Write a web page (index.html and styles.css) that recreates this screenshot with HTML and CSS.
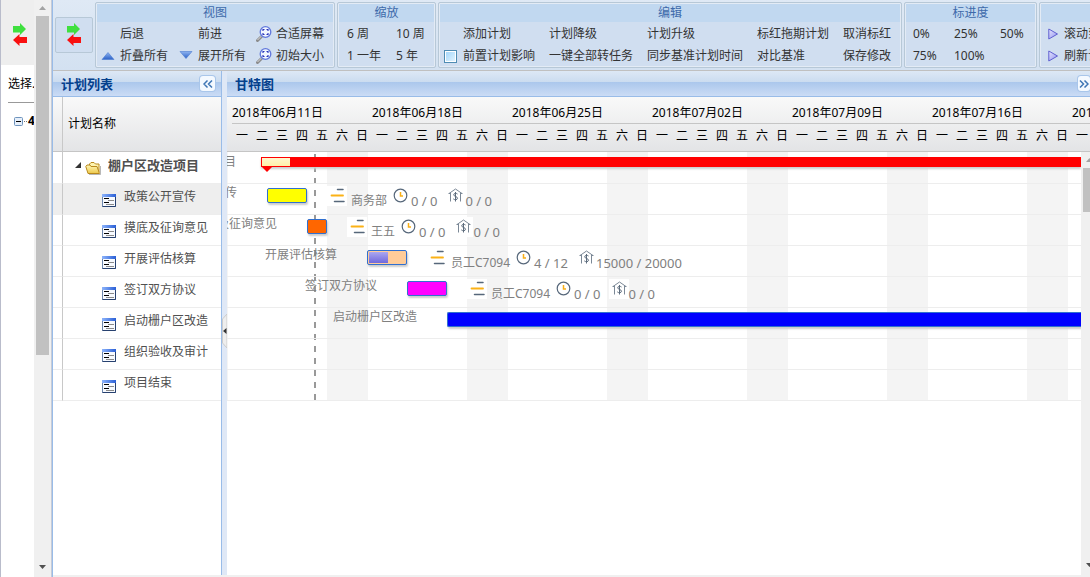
FILE: index.html
```html
<!DOCTYPE html>
<html lang="zh-CN">
<head>
<meta charset="utf-8">
<title>甘特图</title>
<link rel="stylesheet" href="styles.css">
</head>
<body>
<svg class="defs" aria-hidden="true">
  <defs>
    <linearGradient id="g-blue" x1="0" y1="0" x2="0" y2="1"><stop offset="0" stop-color="#8fb4f0"/><stop offset="1" stop-color="#2c62c8"/></linearGradient>
    <linearGradient id="g-violet" x1="0" y1="0" x2="1" y2="1"><stop offset="0" stop-color="#e8e8ff"/><stop offset="1" stop-color="#8f8fee"/></linearGradient>
    <linearGradient id="g-folder" x1="0" y1="0" x2="0" y2="1"><stop offset="0" stop-color="#fff7b8"/><stop offset="1" stop-color="#edc84a"/></linearGradient>
    <linearGradient id="g-title" x1="0" y1="0" x2="1" y2="0"><stop offset="0" stop-color="#8db4fb"/><stop offset="1" stop-color="#2a5fd6"/></linearGradient>
  </defs>
  <symbol id="swap" viewBox="0 0 16 24">
    <path d="M1 3h7V0l6 6-6 6V9.500H1z" fill="#3fe03f"/>
    <path d="M15 14H7.500v-3L1 17l6.500 6v-3H15z" fill="#f91010"/>
  </symbol>
  <symbol id="fit" viewBox="0 0 16 16">
    <path d="M1.500 14.500l4-4" stroke="#8c8c8c" stroke-width="3" stroke-linecap="round"/>
    <path d="M1.500 14l4-4" stroke="#dcdcdc"/>
    <circle cx="9.500" cy="6" r="5.300" fill="#f2f6ff" stroke="#6278dc" stroke-width="1.300"/>
    <path d="M7 5V3.500h1.500M10.500 3.500H12V5M12 7v1.500h-1.500M8.500 8.500H7V7" fill="none" stroke="#2430b8" stroke-width="1.100"/>
  </symbol>
  <symbol id="up" viewBox="0 0 16 16"><path d="M2 11.500L8 4.500l6 7z" fill="url(#g-blue)" stroke="#4a7bd0" stroke-width=".6"/></symbol>
  <symbol id="down" viewBox="0 0 16 16"><path d="M2 3.500h12l-6 7z" fill="url(#g-blue)" stroke="#4a7bd0" stroke-width=".6"/></symbol>
  <symbol id="play" viewBox="0 0 10 12"><path d="M.8 1v10L9.500 6z" fill="url(#g-violet)" stroke="#5f5fd0"/></symbol>
  <symbol id="folder" viewBox="0 0 16 14">
    <path d="M4.500 5V3L6 1.500h3L10.500 3h3.500v8" fill="#fdf3b0" stroke="#b9891c"/>
    <path d="M3 12.500L.8 5.500 2 4h3l1 1.500h6l2.500 7z" fill="url(#g-folder)" stroke="#b9891c" stroke-linejoin="round"/>
    <path d="M4 13.500h11.500V5" fill="none" stroke="#999" stroke-width=".7"/>
  </symbol>
  <symbol id="task" viewBox="0 0 14 13">
    <path d="M.5.500h13v12H.5z" fill="#f7faff" stroke="#6d87ad"/>
    <path d="M0 0h14v3H0z" fill="url(#g-title)"/>
    <path d="M13.500 3v9.500H.5" fill="none" stroke="#27416f"/>
    <path d="M2 4.500h5M2 8.500h5" stroke="#000"/>
    <path d="M6 6.500h6M4 10.500h8" stroke="#8a8a8a"/>
  </symbol>
  <symbol id="member" viewBox="0 0 20 20">
    <path d="M10.500 3.500H16M7.500 15.500H17" stroke="#56677a" stroke-width="1.500" stroke-linecap="round"/>
    <path d="M4.500 9.500H16" stroke="#fbb216" stroke-width="1.800" stroke-linecap="round"/>
  </symbol>
  <symbol id="clock" viewBox="0 0 20 20">
    <circle cx="9.500" cy="9.500" r="6.300" fill="#fff" stroke="#56677a" stroke-width="1.200"/>
    <path d="M9.500 6v4H12" fill="none" stroke="#f8ae16" stroke-width="1.500"/>
  </symbol>
  <symbol id="cost" viewBox="0 0 20 20">
    <path d="M4 7.500L10.500 3 17 7.500M5.500 7v8.500M15.500 7v8.500M3.500 7.500h2M15.500 7.500h2" fill="none" stroke="#7b8896"/>
    <path d="M12.500 8c-1-1-3.800-.9-3.800.8s3.800 1.600 3.800 3.400-3 1.900-4.200.7M10.500 6v9.500" fill="none" stroke="#5c6b7c"/>
  </symbol>
</svg>

<div class="app">
  <aside class="side">
    <div class="side-content">
      <div class="side-top"><svg class="swap"><use href="#swap"/></svg></div>
      <div class="side-label">选择...</div>
      <div class="side-tree">
        <svg class="toggle" viewBox="0 0 14 9"><rect x=".5" y=".5" width="8" height="8" rx="1" fill="#e6effa" stroke="#6f94bd"/><path d="M2 4.500h5" stroke="#000"/><path d="M10 4.500h1M12 4.500h1" stroke="#777"/></svg><b>4</b>
      </div>
    </div>
    <div class="scroll side-scroll">
      <svg class="arrow" viewBox="0 0 7 4"><path d="M0 4l3.500-4L7 4z" fill="#a3a3a3"/></svg>
      <span class="thumb"></span>
      <svg class="arrow last" viewBox="0 0 7 4"><path d="M0 0l3.500 4L7 0z" fill="#505050"/></svg>
    </div>
  </aside>

  <main class="main">
    <div class="toolbar">
      <button class="swap-btn" aria-label="切换"><svg class="swap"><use href="#swap"/></svg></button>
      <section class="group view">
        <h2>视图</h2>
        <div class="cmds">
          <button><i class="ic"></i>后退</button><button><i class="ic"></i>前进</button><button><svg class="ic"><use href="#fit"/></svg>合适屏幕</button>
          <button><svg class="ic"><use href="#up"/></svg>折叠所有</button><button><svg class="ic"><use href="#down"/></svg>展开所有</button><button><svg class="ic"><use href="#fit"/></svg>初始大小</button>
        </div>
      </section>
      <section class="group zoom">
        <h2>缩放</h2>
        <div class="cmds"><button>6 周</button><button>10 周</button><button>1 一年</button><button>5 年</button></div>
      </section>
      <section class="group edit">
        <h2>编辑</h2>
        <div class="cmds">
          <button class="indent">添加计划</button><button>计划降级</button><button>计划升级</button><button>标红拖期计划</button><button>取消标红</button>
          <label><input type="checkbox">前置计划影响</label><button>一键全部转任务</button><button>同步基准计划时间</button><button>对比基准</button><button>保存修改</button>
        </div>
      </section>
      <section class="group progress">
        <h2>标进度</h2>
        <div class="cmds"><button>0%</button><button>25%</button><button>50%</button><button>75%</button><button>100%</button></div>
      </section>
      <section class="group more">
        <h2></h2>
        <div class="cmds"><button><svg class="play"><use href="#play"/></svg>滚动到今天</button><button><svg class="play"><use href="#play"/></svg>刷新计划</button></div>
      </section>
    </div>

    <div class="panels">
      <section class="plans">
        <header class="title"><h1>计划列表</h1><button class="fold" aria-label="收起"><svg viewBox="0 0 10 8"><path d="M4.500.500L1 4l3.500 3.500M9 .500L5.500 4 9 7.500" fill="none" stroke="#3f76b5" stroke-width="1.500"/></svg></button></header>
        <table class="tree">
          <thead><tr><td class="gut"></td><th>计划名称</th></tr></thead>
          <tbody>
            <tr class="root"><td class="gut"></td><td><div class="node"><svg class="caret" viewBox="0 0 6 6"><path d="M6 0v6H0z" fill="#333"/></svg><svg class="folder"><use href="#folder"/></svg><b>棚户区改造项目</b></div></td></tr>
            <tr class="hot"><td class="gut"></td><td><div class="node"><svg class="leaf"><use href="#task"/></svg>政策公开宣传</div></td></tr>
            <tr><td class="gut"></td><td><div class="node"><svg class="leaf"><use href="#task"/></svg>摸底及征询意见</div></td></tr>
            <tr><td class="gut"></td><td><div class="node"><svg class="leaf"><use href="#task"/></svg>开展评估核算</div></td></tr>
            <tr><td class="gut"></td><td><div class="node"><svg class="leaf"><use href="#task"/></svg>签订双方协议</div></td></tr>
            <tr><td class="gut"></td><td><div class="node"><svg class="leaf"><use href="#task"/></svg>启动栅户区改造</div></td></tr>
            <tr><td class="gut"></td><td><div class="node"><svg class="leaf"><use href="#task"/></svg>组织验收及审计</div></td></tr>
            <tr><td class="gut"></td><td><div class="node"><svg class="leaf"><use href="#task"/></svg>项目结束</div></td></tr>
          </tbody>
        </table>
      </section>

      <div class="splitter"><button aria-label="折叠"><svg viewBox="0 0 5 34"><path d="M5 0L.5 5v24L5 34z" fill="#eee" stroke="#ccc"/><path d="M4.500 14v6L1 17z" fill="#333"/></svg></button></div>

      <section class="gantt">
        <header class="title"><h1>甘特图</h1><button class="fold" aria-label="展开"><svg viewBox="0 0 10 8"><path d="M1 .500L4.500 4 1 7.500M5.500.500L9 4 5.500 7.500" fill="none" stroke="#3f76b5" stroke-width="1.500"/></svg></button></header>
        <div class="weeks">
          <div class="week"><p>2018年06月11日</p><div class="days"><span>一</span><span>二</span><span>三</span><span>四</span><span>五</span><span>六</span><span>日</span></div></div>
          <div class="week"><p>2018年06月18日</p><div class="days"><span>一</span><span>二</span><span>三</span><span>四</span><span>五</span><span>六</span><span>日</span></div></div>
          <div class="week"><p>2018年06月25日</p><div class="days"><span>一</span><span>二</span><span>三</span><span>四</span><span>五</span><span>六</span><span>日</span></div></div>
          <div class="week"><p>2018年07月02日</p><div class="days"><span>一</span><span>二</span><span>三</span><span>四</span><span>五</span><span>六</span><span>日</span></div></div>
          <div class="week"><p>2018年07月09日</p><div class="days"><span>一</span><span>二</span><span>三</span><span>四</span><span>五</span><span>六</span><span>日</span></div></div>
          <div class="week"><p>2018年07月16日</p><div class="days"><span>一</span><span>二</span><span>三</span><span>四</span><span>五</span><span>六</span><span>日</span></div></div>
          <div class="week"><p>2018年07月23日</p><div class="days"><span>一</span><span>二</span><span>三</span><span>四</span><span>五</span><span>六</span><span>日</span></div></div>
        </div>
        <div class="chart">
          <div class="rows">
            <div class="row"><span class="name summary-name" style="width:34px">棚户区改造项目</span><span class="summary"><i></i></span></div>
            <div class="row"><span class="name" style="width:40px">政策公开宣传</span><span class="bar yellow" style="width:40px"></span><div class="info"><svg><use href="#member"/></svg><span>商务部</span><svg><use href="#clock"/></svg><em>0 / 0</em><svg><use href="#cost"/></svg><em>0 / 0</em></div></div>
            <div class="row"><span class="name" style="width:80px">摸底及征询意见</span><span class="bar orange" style="width:20px"></span><div class="info"><svg><use href="#member"/></svg><span>王五</span><svg><use href="#clock"/></svg><em>0 / 0</em><svg><use href="#cost"/></svg><em>0 / 0</em></div></div>
            <div class="row"><span class="name" style="width:140px">开展评估核算</span><span class="bar peach" style="width:40px"><i></i></span><div class="info"><svg><use href="#member"/></svg><span>员工C7094</span><svg><use href="#clock"/></svg><em>4 / 12</em><svg><use href="#cost"/></svg><em>15000 / 20000</em></div></div>
            <div class="row"><span class="name" style="width:180px">签订双方协议</span><span class="bar pink" style="width:40px"></span><div class="info"><svg><use href="#member"/></svg><span>员工C7094</span><svg><use href="#clock"/></svg><em>0 / 0</em><svg><use href="#cost"/></svg><em>0 / 0</em></div></div>
            <div class="row"><span class="name" style="width:220px">启动栅户区改造</span><span class="bar blue"></span></div>
            <div class="row"></div>
            <div class="row"></div>
          </div>
          <div class="scroll chart-scroll">
            <svg class="arrow" viewBox="0 0 7 4"><path d="M0 4l3.500-4L7 4z" fill="#a3a3a3"/></svg>
            <span class="thumb"></span>
            <svg class="arrow last" viewBox="0 0 7 4"><path d="M0 0l3.500 4L7 0z" fill="#505050"/></svg>
          </div>
        </div>
      </section>
    </div>
  </main>
</div>
</body>
</html>
```
FILE: styles.css
```css
* { box-sizing: border-box; }
body {
  margin: 0;
  background: #fff;
  color: #000;
  font: 12px/16px "Noto Sans", "Noto Sans CJK SC", sans-serif;
}
h1, h2, p { margin: 0; font-size: 12px; font-weight: normal; }
button {
  padding: 0;
  border: 0;
  background: none;
  color: inherit;
  font: inherit;
  text-align: left;
  white-space: nowrap;
}
svg { display: block; flex: none; }
.defs { position: absolute; width: 0; height: 0; }
.app { display: flex; height: 100vh; overflow: hidden; }

/* Left strip */
.side { display: flex; flex: none; width: 52px; border-left: 1px solid #b9bccb; border-right: 1px solid #c5cbd8; }
.side-content { flex: 1; overflow: hidden; }
.side-top { height: 65px; padding: 23px 0 0 11px; background: #eee; }
.swap { width: 16px; height: 24px; }
.side-label {
  height: 38px;
  margin-left: 7px;
  padding-top: 11px;
  border-bottom: 1px solid #999;
  overflow: hidden;
  white-space: nowrap;
}
.side-tree { display: flex; align-items: center; padding: 10px 0 0 13px; }
.toggle { width: 14px; height: 9px; }
.scroll { display: flex; flex-direction: column; align-items: center; flex: none; background: #f0f0f0; }
.arrow { width: 7px; height: 4px; margin: 6px 0; }
.arrow.last { margin: auto 0 8px; }
.thumb { background: #c1c1c1; }
.side-scroll { width: 17px; }
.side-scroll .thumb { width: 13px; height: 339px; }

/* Toolbar */
.main { display: flex; flex-direction: column; flex: 1; min-width: 0; border-left: 1px solid #99bce8; }
.toolbar {
  display: flex;
  align-items: flex-start;
  flex: none;
  gap: 2px;
  height: 71px;
  padding: 2px 0 0 2px;
  overflow: hidden;
  background: linear-gradient(#dfe9f5, #d3e1f1);
  border-bottom: 1px solid #c0c0c0;
}
.swap-btn { flex: none; width: 38px; height: 36px; margin-top: 15px; padding: 4px 10px; background: #d0def0; border: 1px solid #b7c8d7; border-radius: 2px; }
.group {
  flex: none;
  height: 66px;
  padding: 1px;
  border: 1px solid #b7c8d7;
  border-radius: 2px;
  background: #d0def0;
  box-shadow: inset 0 0 0 1px #e3ebf5;
  color: #333;
}
.group h2 { height: 18px; line-height: 18px; background: #c1d8f0; color: #3e6aaa; text-align: center; }
.cmds { display: grid; grid-auto-rows: 22px; padding-top: 1px; }
.cmds button, .cmds label { display: flex; align-items: center; gap: 4px; white-space: nowrap; }
.ic { flex: none; width: 16px; height: 16px; }
.view { width: 240px; }
.view .cmds { grid-template-columns: repeat(3, 78px); padding-left: 3px; }
.zoom { width: 99px; }
.zoom .cmds { grid-template-columns: repeat(2, 49px); padding-left: 8px; }
.edit { width: 464px; }
.edit .cmds { grid-template-columns: 105px 98px 110px 86px 56px; padding-left: 4px; }
.edit .indent { padding-left: 19px; }
.edit label { gap: 6px; }
.edit input {
  appearance: none;
  width: 13px;
  height: 13px;
  margin: 0;
  border: 1px solid #4f8cb3;
  background: linear-gradient(135deg, #9fd4fa, #e6f6ff);
  box-shadow: inset 0 0 0 1px #fff;
}
.progress { width: 133px; }
.progress .cmds { grid-template-columns: 41px 46px 40px; padding-left: 7px; }
.more { width: 133px; }
.more .cmds { padding-left: 7px; }
.more .cmds button { gap: 6px; }
.play { width: 10px; height: 12px; }

/* Panels */
.panels { display: flex; flex: 1; min-height: 0; border-bottom: 2px solid #f0f0f0; }
.title {
  display: flex;
  align-items: center;
  justify-content: space-between;
  height: 26px;
  padding: 0 6px 0 8px;
  background: linear-gradient(#dde8f5, #cbdcf0 44%, #abc7ec 45%, #cbdcf5);
  border-bottom: 1px solid #99bce8;
}
.title h1 { color: #04408c; font-size: 13px; font-weight: bold; }
.fold { display: grid; place-items: center; width: 15px; height: 15px; border-radius: 3px; background: #f4f9ff; box-shadow: 0 0 0 1px #a9c6ea; }
.fold svg { width: 10px; height: 8px; }
.plans { flex: none; width: 169px; border-right: 1px solid #99bce8; }
.tree { width: 100%; border-collapse: separate; border-spacing: 0; color: #505050; }
.tree th, .tree td { padding: 0; }
.tree thead { color: #000; background: linear-gradient(#f9f9f9, #e3e4e6); }
.tree thead th { height: 55px; padding-left: 5px; font-weight: normal; text-align: left; }
.tree thead th, .tree thead td { border-bottom: 1px solid #c5c5c5; }
.tree .gut { width: 10px; border-right: 1px solid #c8c8c8; }
.tree tbody td { height: 31px; border-bottom: 1px solid #ededed; }
.tree .root td { height: 32px; }
.hot { background: #eee; }
.node { display: flex; align-items: flex-start; height: 30px; padding-left: 39px; line-height: 26px; }
.root .node { padding-left: 12px; line-height: 24px; }
.node b { font-size: 13px; }
.leaf { width: 14px; height: 13px; margin: 10px 8px 0 0; }
.caret { width: 6px; height: 6px; margin: 9px 4px 0 0; }
.folder { width: 16px; height: 14px; margin: 8px 7px 0 0; }
.splitter { display: flex; flex: none; width: 5px; background: #dfe8f6; }
.splitter button { width: 5px; height: 34px; margin-top: 243px; }

/* Chart */
.gantt { display: flex; flex-direction: column; flex: 1; min-width: 0; }
.gantt .title { padding-right: 0; }
.gantt .fold { width: 12px; }
.weeks { display: flex; flex: none; height: 55px; padding-left: 5px; overflow: hidden; background: linear-gradient(#f9f9f9, #e3e4e6); border-bottom: 1px solid #c5c5c5; }
.week { flex: none; width: 140px; }
.week p { height: 27px; padding-top: 8px; border-bottom: 1px solid #c5c5c5; }
.days { display: grid; grid-template-columns: repeat(7, 20px); line-height: 24px; text-align: center; }
.chart { display: flex; flex: 1; min-height: 0; overflow: hidden; }
.rows {
  align-self: flex-start;
  flex: 1;
  min-width: 0;
  padding-top: 1px;
  overflow: hidden;
  background:
    repeating-linear-gradient(transparent 0 2px, #999 2px 8px, transparent 8px 12px) 87px 0 / 2px 100% no-repeat,
    linear-gradient(90deg, #f4f4f4 41px, transparent 41px) 100px 0 / 140px 100%;
}
.row { display: flex; align-items: flex-start; height: 31px; border-bottom: 1px solid #ededed; white-space: nowrap; }
.name { display: flex; justify-content: flex-end; flex: none; height: 30px; padding-right: 30px; overflow: hidden; color: #808080; line-height: 18px; }
.summary-name { padding-right: 25px; }
.bar { flex: none; height: 15px; margin-top: 4px; border: 1px solid #3070d0; border-radius: 2px; box-shadow: 1px 2px 2px #ccc; }
.yellow { background: #ff0; }
.orange { background: #f60; }
.peach { padding: 1px; background: #fc9; }
.peach i { display: block; width: 19px; height: 11px; background: linear-gradient(#aba7f0, #7068dc); }
.pink { background: #f0f; }
.blue { flex: 1; border-right: 0; border-radius: 2px 0 0 2px; background: #00f; }
.summary { flex: 1; height: 10px; margin-top: 4px; padding: 1px; background: #f00; box-shadow: 0 2px 2px #ccc; }
.summary i { display: block; width: 28px; height: 8px; background: linear-gradient(#fff7cf, #fff0a8); }
.summary::after { content: ""; display: block; width: 0; margin-top: 1px; border: 5px solid transparent; border-top-color: #f00; }
.info { display: flex; padding: 2px 0 0 20px; color: #808080; line-height: 30px; }
.info svg { width: 20px; height: 20px; margin-right: 4px; background: #fff; }
.info span { margin-right: 4px; }
.info em { margin-right: 8px; font-size: 13px; font-style: normal; }
.info svg:nth-of-type(n + 2) { margin-right: 0; }
.chart-scroll { width: 9px; overflow: hidden; align-items: flex-start; padding-left: 2px; }
.chart-scroll .arrow { margin-left: 3px; }
.chart-scroll .thumb { width: 13px; height: 44px; }
```
